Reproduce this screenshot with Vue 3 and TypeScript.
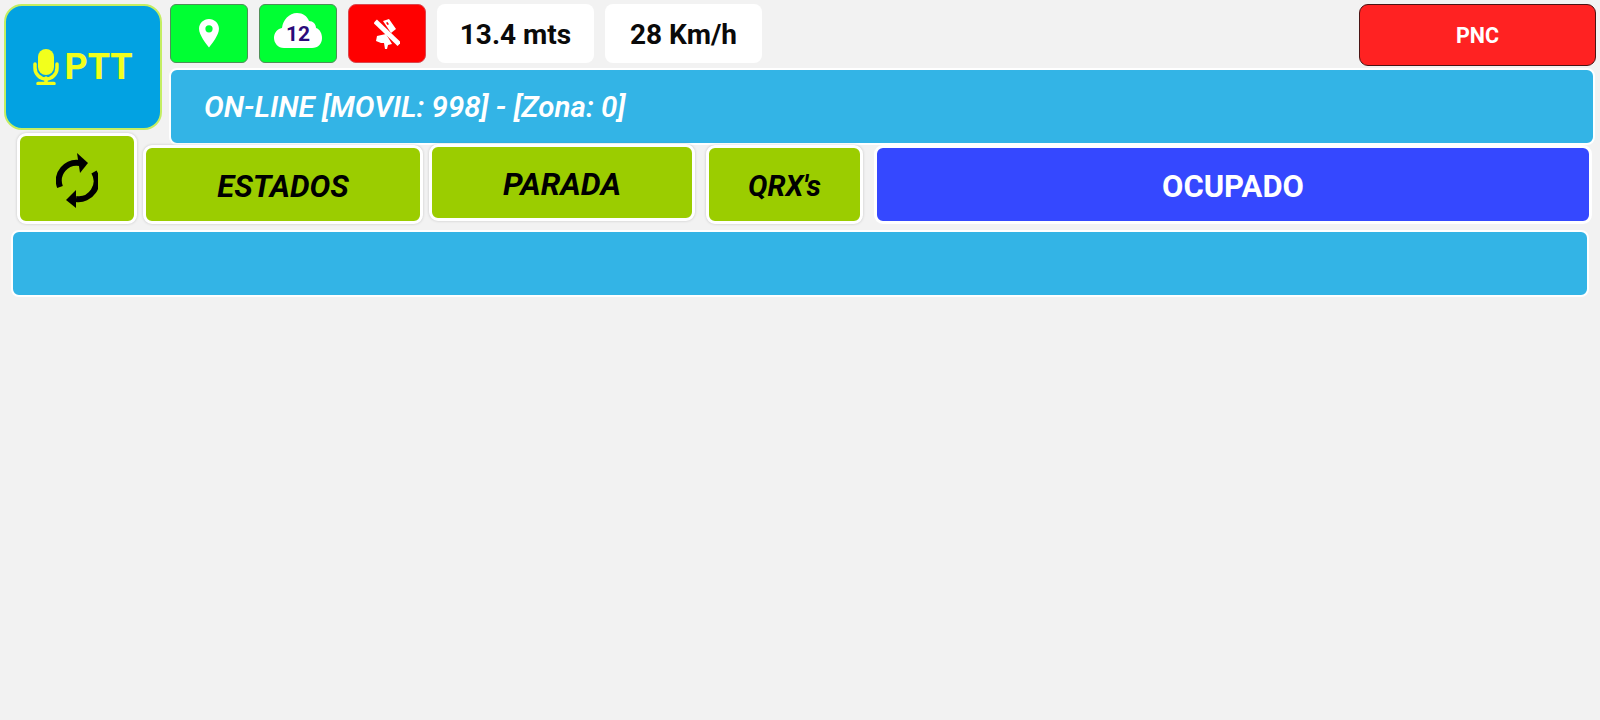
<template>
  <div class="page">
    <div class="top">
      <button class="ptt">
        <svg class="mic" viewBox="0 0 26 36" width="26" height="36">
          <rect x="5" y="0" width="16" height="26" rx="8" fill="#f2ff1c" />
          <path d="M2 15v4a11 11 0 0 0 22 0v-4" fill="none" stroke="#f2ff1c" stroke-width="3.500" stroke-linecap="round" />
          <path d="M13 29v5M5 34.500h16" fill="none" stroke="#f2ff1c" stroke-width="3.500" stroke-linecap="round" />
        </svg>
        <span>PTT</span>
      </button>
      <div class="top-right">
        <div class="status-row">
          <div class="ico green">
            <svg viewBox="0 0 22 32" width="20" height="29">
              <path fill-rule="evenodd" d="M11 0C5 0 0 4.800 0 10.800 0 17.500 7.500 27 11 31.500 14.500 27 22 17.500 22 10.800 22 4.800 17 0 11 0Zm0 6.800a4 4 0 1 1 0 8 4 4 0 0 1 0-8Z" fill="#fff" />
            </svg>
          </div>
          <div class="ico green cloud">
            <svg class="cloud-svg" viewBox="0 0 48 35" width="48" height="35">
              <path d="M10 35C4 35 0 30 0 25 0 20 3 16 8 15 9 7 15 0 23 0 29 0 33 3 35 8 39 8 42 11 42 15 46 16 48 21 48 25 48 31 44 35 38 35Z" fill="#fff" />
            </svg>
            <span class="cloud-num">12</span>
          </div>
          <div class="ico red">
            <svg viewBox="0 0 26 30" width="26" height="30">
              <path d="M3 4 23.500 23.500" stroke="#fff" stroke-width="5" stroke-linecap="square" />
              <path fill-rule="evenodd" d="M9 2 15 0 22 10 17 14ZM13.500 3l-1.500 .8 1.500 2.200 1.500-.8Z" fill="#fff" />
              <path d="M3 17 12 15 18 25 14 26 13 30 11 30 10 24 7 24 2 22Z" fill="#fff" />
            </svg>
          </div>
          <div class="info">13.4 mts</div>
          <div class="info">28 Km/h</div>
          <button class="pnc">PNC</button>
        </div>
        <div class="online">ON-LINE [MOVIL: {{ movil }}] - [Zona: {{ zona }}]</div>
      </div>
    </div>

    <div class="actions">
      <button class="act refresh">
        <svg viewBox="0 0 42 55" width="42" height="55">
          <path d="M4 34A18 18 0 0 1 24 10" fill="none" stroke="#000" stroke-width="6" />
          <path d="M21 0 32 10 24 20Z" fill="#000" />
          <path d="M38 19A18 18 0 0 1 20 46" fill="none" stroke="#000" stroke-width="6" />
          <path d="M20 37 10 47 20 55Z" fill="#000" />
        </svg>
      </button>
      <button class="act estados">ESTADOS</button>
      <button class="act parada">PARADA</button>
      <button class="act qrx">QRX's</button>
      <button class="act ocupado">OCUPADO</button>
    </div>

    <div class="bottom-bar"></div>
  </div>
</template>

<script setup lang="ts">
const movil = 998
const zona = 0
</script>

<style>
html,
body {
  background: #f2f2f2;
}
</style>

<style scoped>
.page {
  height: 720px;
  box-sizing: border-box;
  padding: 4px 4px 0 4px;
  font-family: Roboto, "Liberation Sans", sans-serif;
  overflow: hidden;
}

button {
  font-family: inherit;
  padding: 0;
  cursor: pointer;
}

.top {
  display: flex;
  gap: 7px;
}

.ptt {
  width: 158px;
  height: 126px;
  flex: none;
  box-sizing: border-box;
  border: 2px solid #c4ee62;
  border-radius: 18px;
  background: #02a2e2;
  color: #f2ff1c;
  font-size: 36px;
  font-weight: 700;
  display: flex;
  align-items: center;
  justify-content: center;
  gap: 5px;
}

.top-right {
  flex: 1;
  min-width: 0;
}

.status-row {
  display: flex;
  gap: 11px;
  align-items: flex-start;
  height: 64px;
  margin-left: 1px;
}

.ico {
  width: 78px;
  height: 59px;
  box-sizing: border-box;
  border-radius: 6px;
  display: flex;
  align-items: center;
  justify-content: center;
  position: relative;
}

.green {
  background: #00ff33;
  border: 1px solid #4f8f58;
}

.red {
  background: #ff0000;
  border: 1px solid #d9484f;
  border-radius: 8px;
}

.cloud-svg {
  margin-top: -6px;
}

.cloud-num {
  position: absolute;
  left: 0;
  right: 0;
  top: 18px;
  text-align: center;
  color: #2b0a7a;
  font-size: 21px;
  font-weight: 700;
  line-height: 22px;
}

.info {
  width: 157px;
  height: 58px;
  padding-top: 1px;
  background: #fff;
  border-radius: 8px;
  display: flex;
  align-items: center;
  justify-content: center;
  font-size: 28px;
  font-weight: 700;
  color: #0a0a0a;
}

.pnc {
  margin-left: auto;
  width: 237px;
  height: 62px;
  box-sizing: border-box;
  background: #ff2222;
  border: 1.500px solid #4a1414;
  border-radius: 9px;
  color: #fff;
  font-size: 21.500px;
  font-weight: 700;
}

.online {
  margin: 0 1px 0 0;
  height: 73px;
  background: #33b4e6;
  border: 2px solid #fff;
  border-radius: 8px;
  display: flex;
  align-items: center;
  padding-left: 33px;
  color: #fff;
  font-size: 29.500px;
  font-weight: 600;
  font-style: italic;
}

.actions {
  display: flex;
  align-items: flex-start;
  margin: -12px 0 0 13px;
}

.act {
  box-sizing: content-box;
  border: 3px solid #fff;
  border-radius: 9px;
  background: #9bcd00;
  color: #000;
  font-size: 31px;
  font-weight: 700;
  font-style: italic;
  box-shadow: 0 0 3px rgba(0, 0, 0, 0.18);
}

.refresh {
  width: 114px;
  height: 85px;
  display: flex;
  align-items: center;
  justify-content: center;
}

.refresh svg {
  margin-top: 4px;
}

.estados {
  width: 274px;
  height: 69px;
  padding-top: 4px;
  margin: 12px 0 0 6px;
}

.parada {
  width: 260px;
  height: 67px;
  padding-top: 4px;
  margin: 11px 0 0 6px;
  font-size: 31.500px;
}

.qrx {
  width: 151px;
  height: 71px;
  padding-top: 2px;
  margin: 12px 0 0 11px;
  font-size: 29px;
}

.ocupado {
  width: 712px;
  height: 69px;
  padding-top: 4px;
  margin: 12px 0 0 11px;
  background: #3548ff;
  color: #fff;
  font-size: 31px;
  font-style: normal;
  box-shadow: none;
}

.bottom-bar {
  margin: 6px 0 0 7px;
  width: 1574px;
  height: 63px;
  background: #33b4e6;
  border: 2px solid #fff;
  border-radius: 8px;
}
</style>
